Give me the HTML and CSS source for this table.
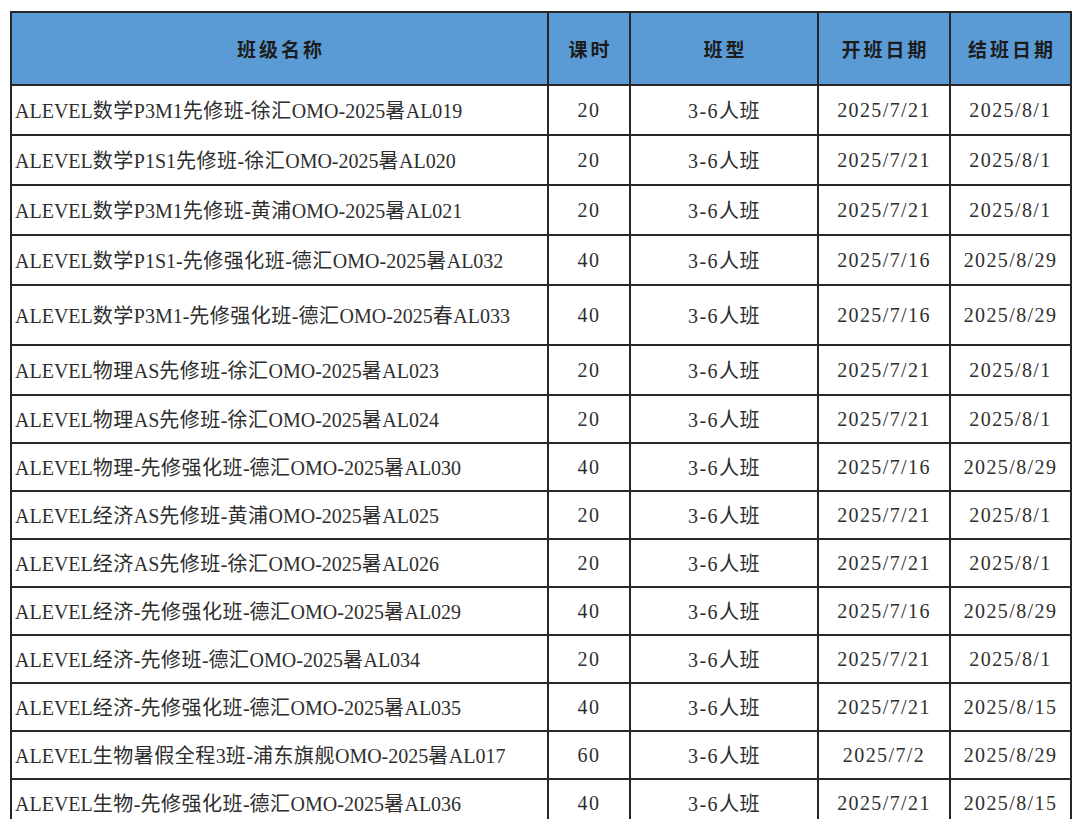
FILE: index.html
```html
<!DOCTYPE html>
<html lang="zh-CN">
<head>
<meta charset="utf-8">
<title>ALEVEL 课程表</title>
<link rel="stylesheet" href="styles.css">
</head>
<body>
<div class="page">
<table class="sheet">
  <colgroup>
    <col class="c-name"><col class="c-hours"><col class="c-type"><col class="c-start"><col class="c-end">
  </colgroup>
  <thead>
    <tr>
      <th>班级名称</th><th>课时</th><th>班型</th><th>开班日期</th><th>结班日期</th>
    </tr>
  </thead>
  <tbody>
    <tr class="w"><td class="name">ALEVEL<span class="h">数学</span>P3M1<span class="h">先修班</span>-<span class="h">徐汇</span>OMO-2025<span class="h">暑</span>AL019</td><td>20</td><td>3-6<span class="h">人班</span></td><td>2025/7/21</td><td>2025/8/1</td></tr>
    <tr class="w"><td class="name">ALEVEL<span class="h">数学</span>P1S1<span class="h">先修班</span>-<span class="h">徐汇</span>OMO-2025<span class="h">暑</span>AL020</td><td>20</td><td>3-6<span class="h">人班</span></td><td>2025/7/21</td><td>2025/8/1</td></tr>
    <tr class="w"><td class="name">ALEVEL<span class="h">数学</span>P3M1<span class="h">先修班</span>-<span class="h">黄浦</span>OMO-2025<span class="h">暑</span>AL021</td><td>20</td><td>3-6<span class="h">人班</span></td><td>2025/7/21</td><td>2025/8/1</td></tr>
    <tr class="w"><td class="name">ALEVEL<span class="h">数学</span>P1S1-<span class="h">先修强化班</span>-<span class="h">德汇</span>OMO-2025<span class="h">暑</span>AL032</td><td>40</td><td>3-6<span class="h">人班</span></td><td>2025/7/16</td><td>2025/8/29</td></tr>
    <tr class="tall"><td class="name">ALEVEL<span class="h">数学</span>P3M1-<span class="h">先修强化班</span>-<span class="h">德汇</span>OMO-2025<span class="h">春</span>AL033</td><td>40</td><td>3-6<span class="h">人班</span></td><td>2025/7/16</td><td>2025/8/29</td></tr>
    <tr class="w"><td class="name">ALEVEL<span class="h">物理</span>AS<span class="h">先修班</span>-<span class="h">徐汇</span>OMO-2025<span class="h">暑</span>AL023</td><td>20</td><td>3-6<span class="h">人班</span></td><td>2025/7/21</td><td>2025/8/1</td></tr>
    <tr><td class="name">ALEVEL<span class="h">物理</span>AS<span class="h">先修班</span>-<span class="h">徐汇</span>OMO-2025<span class="h">暑</span>AL024</td><td>20</td><td>3-6<span class="h">人班</span></td><td>2025/7/21</td><td>2025/8/1</td></tr>
    <tr><td class="name">ALEVEL<span class="h">物理</span>-<span class="h">先修强化班</span>-<span class="h">德汇</span>OMO-2025<span class="h">暑</span>AL030</td><td>40</td><td>3-6<span class="h">人班</span></td><td>2025/7/16</td><td>2025/8/29</td></tr>
    <tr><td class="name">ALEVEL<span class="h">经济</span>AS<span class="h">先修班</span>-<span class="h">黄浦</span>OMO-2025<span class="h">暑</span>AL025</td><td>20</td><td>3-6<span class="h">人班</span></td><td>2025/7/21</td><td>2025/8/1</td></tr>
    <tr><td class="name">ALEVEL<span class="h">经济</span>AS<span class="h">先修班</span>-<span class="h">徐汇</span>OMO-2025<span class="h">暑</span>AL026</td><td>20</td><td>3-6<span class="h">人班</span></td><td>2025/7/21</td><td>2025/8/1</td></tr>
    <tr><td class="name">ALEVEL<span class="h">经济</span>-<span class="h">先修强化班</span>-<span class="h">德汇</span>OMO-2025<span class="h">暑</span>AL029</td><td>40</td><td>3-6<span class="h">人班</span></td><td>2025/7/16</td><td>2025/8/29</td></tr>
    <tr><td class="name">ALEVEL<span class="h">经济</span>-<span class="h">先修班</span>-<span class="h">德汇</span>OMO-2025<span class="h">暑</span>AL034</td><td>20</td><td>3-6<span class="h">人班</span></td><td>2025/7/21</td><td>2025/8/1</td></tr>
    <tr><td class="name">ALEVEL<span class="h">经济</span>-<span class="h">先修强化班</span>-<span class="h">德汇</span>OMO-2025<span class="h">暑</span>AL035</td><td>40</td><td>3-6<span class="h">人班</span></td><td>2025/7/21</td><td>2025/8/15</td></tr>
    <tr><td class="name">ALEVEL<span class="h">生物暑假全程</span>3<span class="h">班</span>-<span class="h">浦东旗舰</span>OMO-2025<span class="h">暑</span>AL017</td><td>60</td><td>3-6<span class="h">人班</span></td><td>2025/7/2</td><td>2025/8/29</td></tr>
    <tr><td class="name">ALEVEL<span class="h">生物</span>-<span class="h">先修强化班</span>-<span class="h">德汇</span>OMO-2025<span class="h">暑</span>AL036</td><td>40</td><td>3-6<span class="h">人班</span></td><td>2025/7/21</td><td>2025/8/15</td></tr>
  </tbody>
</table>
</div>
</body>
</html>
```

FILE: styles.css
```css
html, body {
  margin: 0;
  padding: 0;
  background: #ffffff;
}

.page {
  padding: 11px 0 0 10px;
  overflow: hidden;
  height: 819px;
  box-sizing: border-box;
}

.sheet {
  border-collapse: collapse;
  table-layout: fixed;
  width: 1060px;
  font-family: "Liberation Serif", "Noto Sans CJK SC", serif;
  font-size: 20px;
  color: #2e2e2e;
}

.c-name { width: 537px; }
.c-hours { width: 82px; }
.c-type { width: 188px; }
.c-start { width: 132px; }
.c-end { width: 121px; }

.sheet th,
.sheet td {
  border: 2px solid #262626;
  padding: 0;
  text-align: center;
  vertical-align: middle;
  white-space: nowrap;
  line-height: 26px;
  letter-spacing: 1.4px;
}

.sheet thead tr {
  height: 73px;
}

.sheet th {
  background: #5b9bd5;
  font-family: "Noto Sans CJK SC", sans-serif;
  font-weight: 700;
  font-size: 19px;
  letter-spacing: 3px;
  color: #1c1c1c;
  padding-left: 3px;
}

.sheet tbody tr {
  height: 48px;
}

.sheet tbody tr.w {
  height: 50px;
}

.sheet tbody tr.tall {
  height: 60px;
}

.sheet td.name {
  text-align: left;
  padding-left: 3px;
  letter-spacing: 0;
}

.h {
  font-family: "Noto Sans CJK SC", sans-serif;
  font-size: 20px;
  font-weight: 400;
  letter-spacing: 0.5px;
}
```
